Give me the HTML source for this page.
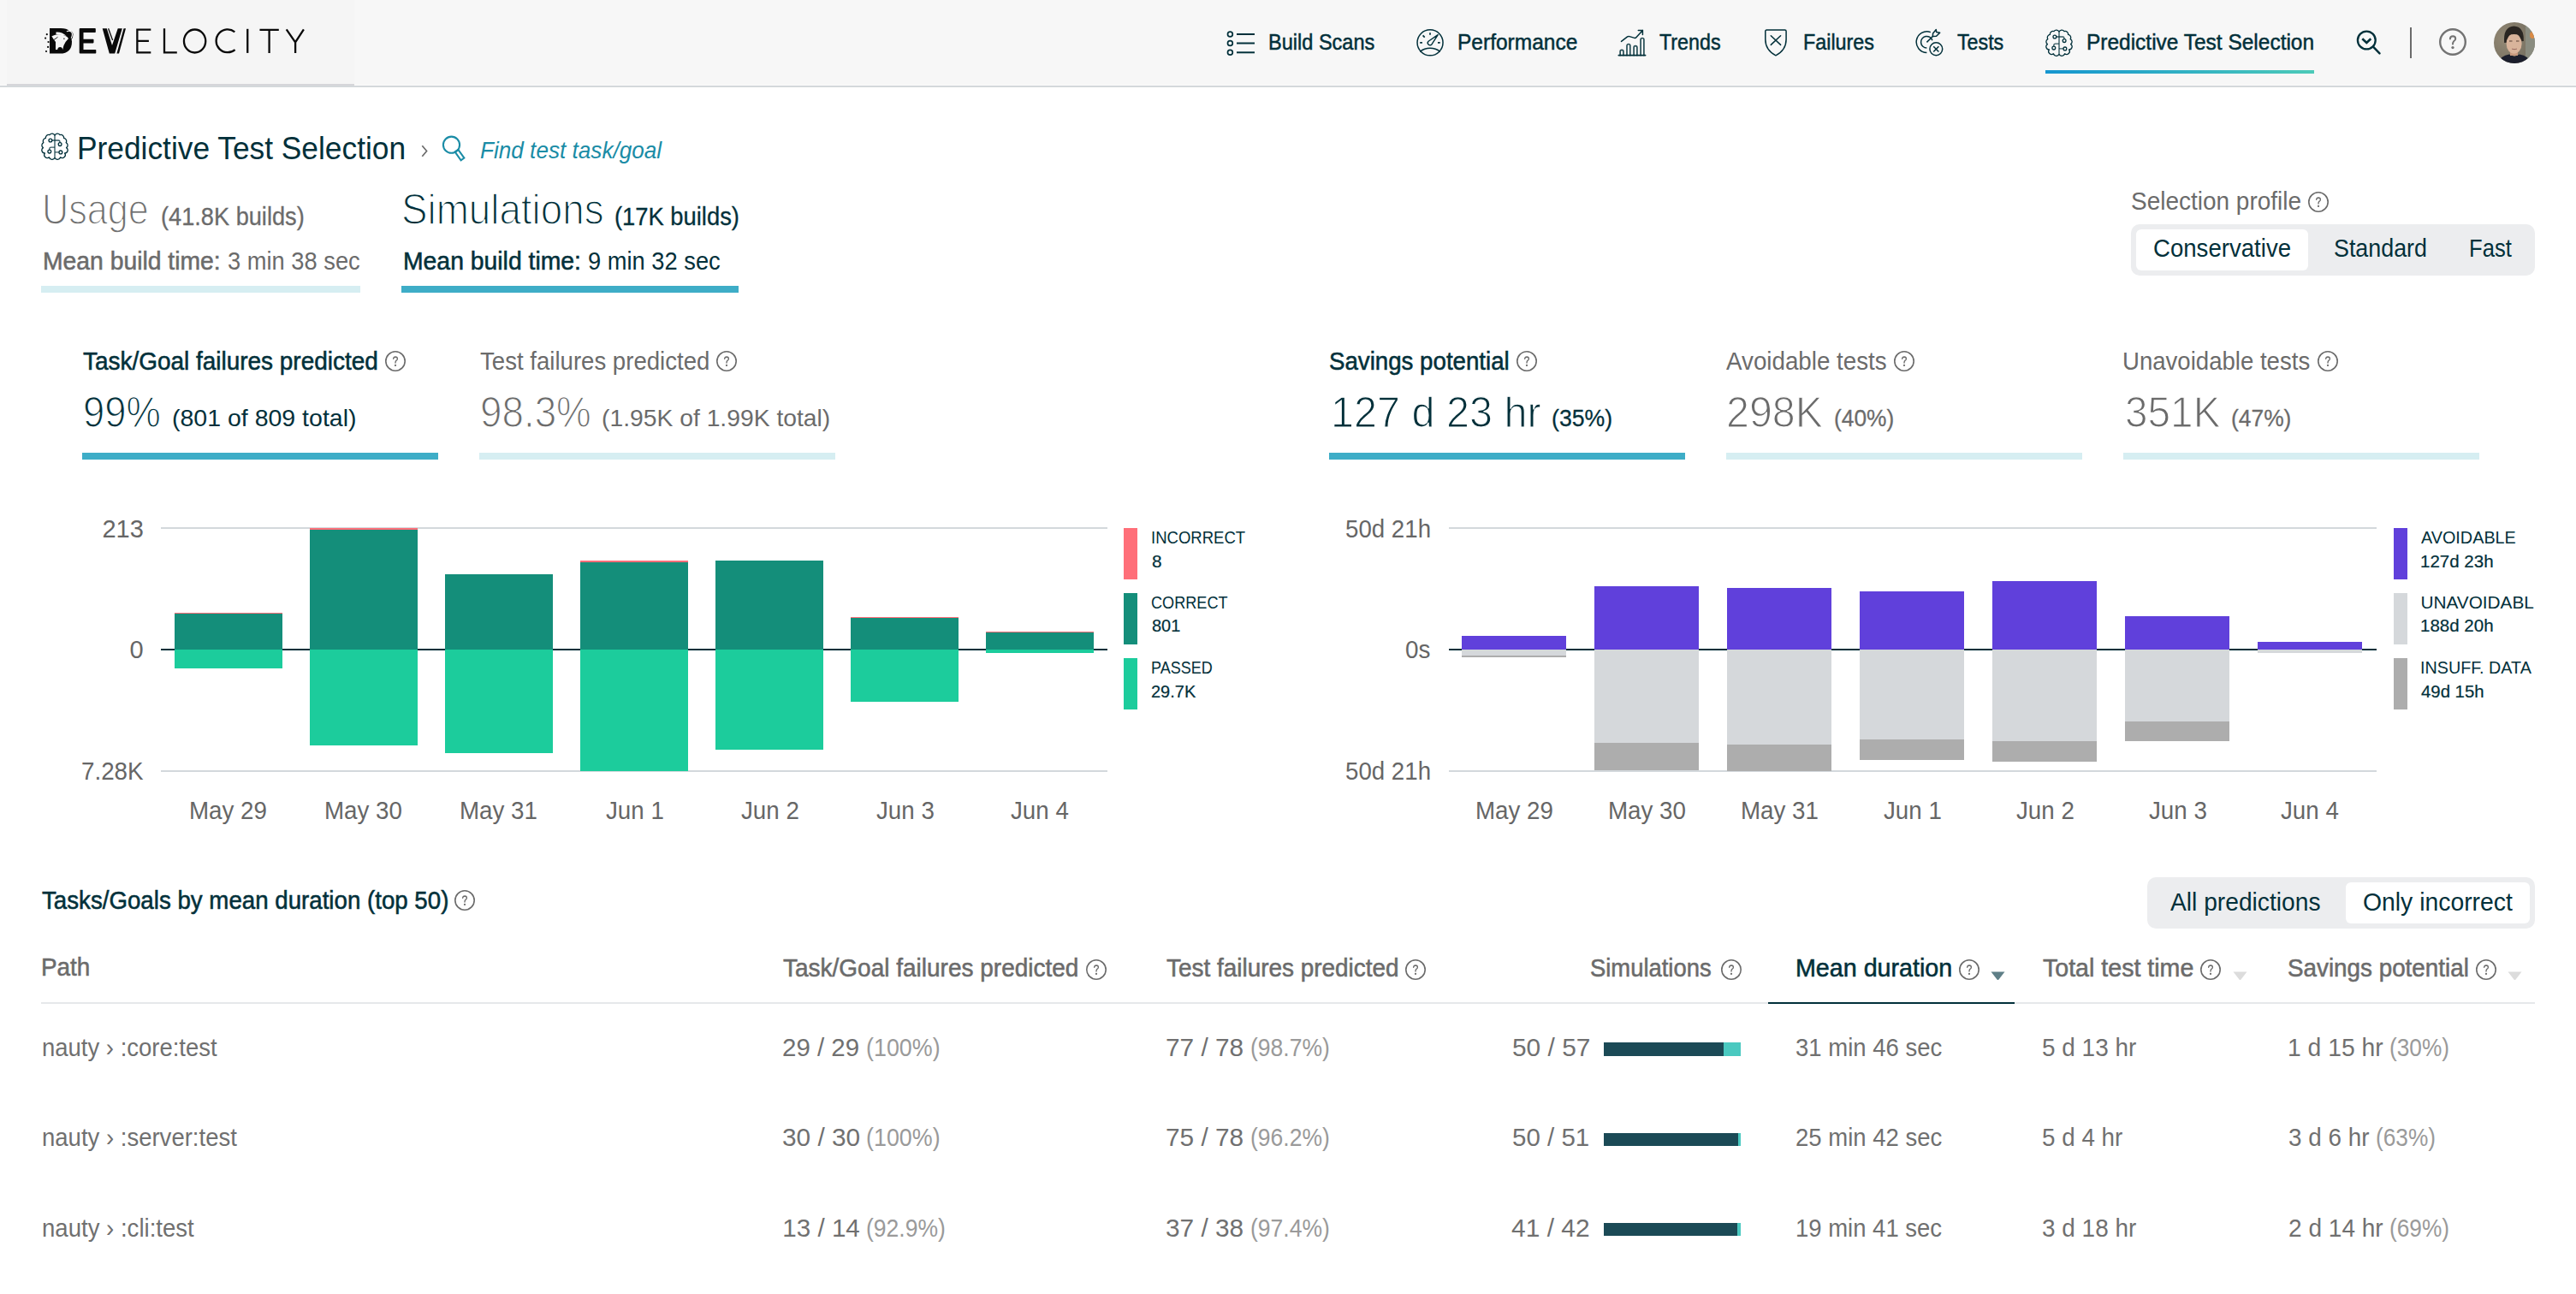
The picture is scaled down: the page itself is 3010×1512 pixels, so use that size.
<!DOCTYPE html>
<html><head><meta charset="utf-8"><style>
html,body{margin:0;padding:0;}
body{width:3010px;height:1512px;position:relative;overflow:hidden;background:#fff;font-family:"Liberation Sans",sans-serif;}
</style></head><body>
<div style="position:absolute;left:0px;top:0px;width:3010px;height:99px;background:#f7f7f7;"></div>
<div style="position:absolute;left:0px;top:99px;width:3010px;height:1px;background:#fafafa;"></div>
<div style="position:absolute;left:0px;top:100px;width:3010px;height:2px;background:#d4d8db;"></div>
<div style="position:absolute;left:8px;top:0px;width:406px;height:98px;background:#f5f5f5;"></div>
<div style="position:absolute;left:8px;top:98px;width:406px;height:2px;background:#d6d6da;"></div>
<svg style="position:absolute;left:50px;top:30px" width="310" height="36" viewBox="50 30 310 36">
<g fill="#0a0a0a">
<path d="M58 33.1 H71 Q78 33.1 81 36 Q85 36 85.5 40 Q85.5 44 83.5 46 Q84 48 84 48.5 Q84 62.6 70 62.6 H58 Z"/>
<path d="M92.7 34 Q92.7 33.1 93.7 33.1 H111 Q111.8 33.1 111.8 34 V37.2 Q111.8 38 111 38 H97.5 V45.7 H108.7 Q109.5 45.7 109.5 46.5 V49.6 Q109.5 50.4 108.7 50.4 H97.5 V57.9 H111.5 Q112.3 57.9 112.3 58.7 V61.8 Q112.3 62.6 111.5 62.6 H93.7 Q92.7 62.6 92.7 61.6 Z"/>
<path d="M119.7 33.3 H124.8 L131 53 L137.7 33.3 H142.8 L134.2 62.6 H127.8 Z"/>
<path d="M144.5 33.3 H147 L139 62.6 H136.4 Z"/>
<circle cx="54.8" cy="40.2" r="1.1"/><circle cx="53.1" cy="44.6" r="1.1"/><circle cx="56.5" cy="49.1" r="1.1"/><circle cx="56.1" cy="54.9" r="1.1"/><circle cx="54" cy="60" r="1.1"/>
</g>
<g fill="#f5f5f5">

<path d="M60.4 42.2 Q68 38.6 75.5 41.6 Q79 43 80 45 Q76 49 74.5 53 Q73.8 56 73.2 57.9 H65 V49 Q62.5 46 60.4 42.2 Z"/>
<path d="M65.5 37.6 Q72 37 77.5 41.8 Q73 40.8 65.5 40.3 Z"/>
<path d="M77.5 36.5 Q81 34.5 84.3 37 Q86 40.5 83.6 45 L82.7 44.5 Q84.6 40.5 83.3 38 Q81 36 78.2 37.3 Z"/>
<path d="M67.2 57.9 Q67.5 54.9 70.2 54.9 Q72.9 54.9 73.2 57.9 Z" fill="#0a0a0a"/>
</g>
<circle cx="74.9" cy="45.3" r="0.7" fill="#0a0a0a"/>
<path d="M126.6 33.3 L131.6 47" stroke="#0a0a0a" stroke-width="1.3"/>
<path d="M63 46.5 L67.5 43.3" stroke="#0a0a0a" stroke-width="0.9"/>
<g fill="none" stroke="#0a0a0a" stroke-width="2.3">
<path d="M176.3 34.7 H160.35 V61.3 H176.3 M160.35 47.8 H173.9"/>
<path d="M192 33.3 V61.3 H206.8"/>
<ellipse cx="227.6" cy="48" rx="12.65" ry="13.5"/>
<path d="M274.3 37.3 A13.4 13.4 0 1 0 274.6 58.1"/>
<path d="M289.25 33.8 V61.9"/>
<path d="M303.45 34.8 H325.8 M314.6 34.8 V61.9"/>
<path d="M334.7 34.3 L345.1 49.45 L354.9 34.3 M345.1 49.45 V61.9"/>
</g>
</svg>
<div style="position:absolute;left:2390px;top:82px;width:314px;height:4px;background:linear-gradient(90deg,#1596d0,#4ccab8)"></div>
<svg style="position:absolute;left:1430px;top:34px" width="40" height="32" viewBox="0 0 40 32">
<g fill="none" stroke="#02303a" stroke-width="1.7"><circle cx="7.4" cy="6" r="2.9"/><circle cx="7.4" cy="16.5" r="2.9"/><circle cx="7.4" cy="27.3" r="2.9"/></g>
<g stroke="#02303a" stroke-width="2"><path d="M15 6 H36"/><path d="M15 16.5 H36"/><path d="M15 27.3 H36"/></g></svg>
<svg style="position:absolute;left:1654px;top:33px" width="34" height="34" viewBox="0 0 34 34">
<g fill="none" stroke="#02303a" stroke-width="1.5"><circle cx="17.05" cy="16.85" r="15"/>
<path d="M5.2 27.3 A19.4 19.4 0 0 1 28.8 27.3"/>
<path d="M17 5.2 V7.8 M8.6 8.4 L10.7 10.6 M5.2 16.9 H7.9 M26 16.9 H28.7" stroke-width="1.7"/>
<path d="M26.2 7.7 L15.07 15.21 A2.7 2.7 0 1 0 18.93 18.99 Z" stroke-width="1.4" stroke-linejoin="round"/></g></svg>
<svg style="position:absolute;left:1890px;top:34px" width="34" height="32" viewBox="0 0 34 32">
<g fill="none" stroke="#02303a" stroke-width="1.5" stroke-linecap="round" stroke-linejoin="round">
<path d="M1.3 30.6 H32.6" stroke-width="1.7"/>
<path d="M3.15 30.6 V26.3 A1.9 1.9 0 0 1 6.95 26.3 V30.6 M11 30.6 V19.4 A1.9 1.9 0 0 1 14.8 19.4 V30.6 M19.1 30.6 V21.6 A1.9 1.9 0 0 1 22.9 21.6 V30.6 M27.1 30.6 V12.4 A1.9 1.9 0 0 1 30.9 12.4 V30.6" stroke-width="1.7" stroke-opacity="0.85"/>
<path d="M4.5 14.4 L11.6 8.9 Q12.7 8.2 14 8.6 L20 10.4 Q20.9 10.6 21.6 9.9 L29.4 1.4 M24.3 1.4 H29.4 V6.6"/></g></svg>
<svg style="position:absolute;left:2061px;top:34px" width="28" height="33" viewBox="0 0 28 33">
<path d="M1.8 2.6 Q1.8 1.1 3.3 1.1 H24.6 Q26.1 1.1 26.1 2.6 V12 Q26.1 24.5 13.95 30.8 Q1.8 24.5 1.8 12 Z" fill="none" stroke="#02303a" stroke-width="1.5" stroke-linejoin="round"/>
<path d="M8.3 7.7 L19.6 18.4 M19.6 7.7 L8.3 18.4" stroke="#02303a" stroke-width="1.5" stroke-linecap="round"/></svg>
<svg style="position:absolute;left:2238px;top:33px" width="35" height="35" viewBox="0 0 35 35">
<g fill="none" stroke="#02303a" stroke-width="1.5" stroke-linejoin="round">
<path d="M17.85 4.6 A12.3 12.3 0 1 0 13.4 28.4"/>
<path d="M19.9 14.3 A6.8 6.8 0 1 0 13.4 23"/>
<path d="M13.4 16.4 L20.3 9.5"/>
<path d="M20.3 9.5 L20.6 5.9 L24.3 1.6 L24.7 4.6 L28.7 5.2 L24.6 9.3 Z"/>
<circle cx="24.3" cy="24.25" r="7.4"/>
<path d="M21.25 21.2 L27.4 27.6 M27.4 21.2 L21.25 27.6"/></g></svg>
<svg style="position:absolute;left:2390px;top:34px" width="32" height="32" viewBox="0 0 32 32">
<g fill="none" stroke="#02303a" stroke-width="1.3" stroke-linejoin="round">
<path d="M16 3.2 A3.5 3.5 0 0 0 10 2.6 A3.5 3.5 0 0 0 5.4 6.4 A3.5 3.5 0 0 0 2.8 11.6 A3.5 3.5 0 0 0 2.4 17.6 A3.5 3.5 0 0 0 4.4 24 A3.5 3.5 0 0 0 9.4 28.8 A3.5 3.5 0 0 0 16 29.2"/>
<path d="M16 3.2 A3.5 3.5 0 0 1 22 2.6 A3.5 3.5 0 0 1 26.6 6.4 A3.5 3.5 0 0 1 29.2 11.6 A3.5 3.5 0 0 1 29.6 17.6 A3.5 3.5 0 0 1 27.6 24 A3.5 3.5 0 0 1 22.6 28.8 A3.5 3.5 0 0 1 16 29.2"/>
<path d="M16 3 V29.5" stroke-width="1.8199999999999998" opacity="0.6"/>
<path d="M12.8 9 H20.3 Q22.1 9 22.1 11.7 M9.8 20.2 V19 Q9.8 17.1 11.7 17.1 H16 M16 22.9 H21" opacity="0.8"/>
<circle cx="10.9" cy="9" r="1.9"/><circle cx="22.1" cy="13.6" r="1.9"/><circle cx="9.8" cy="22.1" r="1.9"/><circle cx="22.9" cy="22.9" r="1.9"/>
</g></svg>
<svg style="position:absolute;left:2750px;top:32px" width="36" height="36" viewBox="0 0 36 36">
<circle cx="15.3" cy="15" r="10.4" fill="none" stroke="#02303a" stroke-width="2.3"/>
<path d="M23 22.7 L30.5 30.3" stroke="#02303a" stroke-width="2.5" stroke-linecap="round"/>
<path d="M10.3 13.2 L15.3 18 L20.3 13.2" fill="none" stroke="#02303a" stroke-width="2.6"/></svg>
<div style="position:absolute;left:2816px;top:32px;width:2px;height:36px;background:#6b6b6b;"></div>
<svg style="position:absolute;left:2850px;top:33px" width="32" height="32" viewBox="0 0 32 32"><circle cx="16" cy="16" r="14.80" fill="none" stroke="#737373" stroke-width="2.40"/><path d="M12.9 12.4 Q13.1 9.3 16.1 9.3 Q19.2 9.4 19.2 12.2 Q19.2 14 17.2 15.2 Q16 16.1 16 18.6" fill="none" stroke="#737373" stroke-width="2.04" stroke-linecap="round"/><circle cx="16" cy="22.6" r="1.68" fill="#737373"/></svg>
<svg style="position:absolute;left:2914px;top:26px" width="48" height="48" viewBox="0 0 48 48">
<defs><clipPath id="avc"><circle cx="24" cy="24" r="24"/></clipPath>
<radialGradient id="avbg" cx="0.3" cy="0.4" r="0.8"><stop offset="0" stop-color="#958a76"/><stop offset="1" stop-color="#6f6a5c"/></radialGradient></defs>
<g clip-path="url(#avc)">
<rect width="48" height="48" fill="url(#avbg)"/>
<rect x="37" y="0" width="11" height="48" fill="#8a8c80"/>
<ellipse cx="45" cy="15" rx="3" ry="4" fill="#d98a45"/>
<path d="M4 48 Q8 39 18 37.5 L24 40 L30 37.5 Q40 39 44 48 Z" fill="#1b1e2c"/>
<rect x="19" y="31" width="9" height="8" fill="#c7997e"/>
<path d="M12.2 24 Q10.5 5.5 23.5 4.5 Q35.5 5 34.8 22 Z" fill="#2a2622"/>
<ellipse cx="23.6" cy="25" rx="9" ry="11.8" fill="#d9b49b"/>
<path d="M14.3 21 Q14 12.5 23.6 11.8 Q32.5 12.3 33 20 Q31.5 14.8 27 14.2 Q21 13.6 17.5 15 Q15 16.8 14.3 21 Z" fill="#2a2622"/>
<path d="M18 22 H21.5 M26 22 H29.5" stroke="#5a4034" stroke-width="1.1"/>
<path d="M21 31 Q24 32.5 27 31" stroke="#a8786a" stroke-width="1"/>
</g></svg>
<svg style="position:absolute;left:48px;top:155px" width="32" height="32" viewBox="0 0 32 32">
<g fill="none" stroke="#02303a" stroke-width="1.3" stroke-linejoin="round">
<path d="M16 3.2 A3.5 3.5 0 0 0 10 2.6 A3.5 3.5 0 0 0 5.4 6.4 A3.5 3.5 0 0 0 2.8 11.6 A3.5 3.5 0 0 0 2.4 17.6 A3.5 3.5 0 0 0 4.4 24 A3.5 3.5 0 0 0 9.4 28.8 A3.5 3.5 0 0 0 16 29.2"/>
<path d="M16 3.2 A3.5 3.5 0 0 1 22 2.6 A3.5 3.5 0 0 1 26.6 6.4 A3.5 3.5 0 0 1 29.2 11.6 A3.5 3.5 0 0 1 29.6 17.6 A3.5 3.5 0 0 1 27.6 24 A3.5 3.5 0 0 1 22.6 28.8 A3.5 3.5 0 0 1 16 29.2"/>
<path d="M16 3 V29.5" stroke-width="1.8199999999999998" opacity="0.6"/>
<path d="M12.8 9 H20.3 Q22.1 9 22.1 11.7 M9.8 20.2 V19 Q9.8 17.1 11.7 17.1 H16 M16 22.9 H21" opacity="0.8"/>
<circle cx="10.9" cy="9" r="1.9"/><circle cx="22.1" cy="13.6" r="1.9"/><circle cx="9.8" cy="22.1" r="1.9"/><circle cx="22.9" cy="22.9" r="1.9"/>
</g></svg>
<svg style="position:absolute;left:488px;top:166px" width="14" height="20" viewBox="0 0 14 20"><path d="M5.3 4.2 L10.6 10.5 L5.3 16.8" fill="none" stroke="#6b6b6b" stroke-width="1.7"/></svg>
<svg style="position:absolute;left:514px;top:156px" width="34" height="36" viewBox="0 0 34 36"><circle cx="13.5" cy="13.2" r="9.6" fill="none" stroke="#1a8ca6" stroke-width="2.1"/><path d="M17.6 21.4 L21.4 18.8 L28.4 28.6 L24.6 31.4 Z" fill="none" stroke="#1a8ca6" stroke-width="2" stroke-linejoin="miter"/></svg>
<div style="position:absolute;left:48px;top:334px;width:373px;height:8px;background:#d6eef2;"></div>
<div style="position:absolute;left:469px;top:334px;width:394px;height:8px;background:#3eadc7;"></div>
<svg style="position:absolute;left:2697px;top:224px" width="24" height="24" viewBox="0 0 32 32"><circle cx="16" cy="16" r="14.93" fill="none" stroke="#6b6b6b" stroke-width="2.13"/><path d="M12.9 12.4 Q13.1 9.3 16.1 9.3 Q19.2 9.4 19.2 12.2 Q19.2 14 17.2 15.2 Q16 16.1 16 18.6" fill="none" stroke="#6b6b6b" stroke-width="1.81" stroke-linecap="round"/><circle cx="16" cy="22.6" r="1.49" fill="#6b6b6b"/></svg>
<div style="position:absolute;left:2490px;top:262px;width:472px;height:60px;background:#ecedef;border-radius:10px;"></div>
<div style="position:absolute;left:2496px;top:268px;width:201px;height:48px;background:#fff;border-radius:6px;"></div>
<svg style="position:absolute;left:450px;top:410px" width="24" height="24" viewBox="0 0 32 32"><circle cx="16" cy="16" r="14.93" fill="none" stroke="#6b6b6b" stroke-width="2.13"/><path d="M12.9 12.4 Q13.1 9.3 16.1 9.3 Q19.2 9.4 19.2 12.2 Q19.2 14 17.2 15.2 Q16 16.1 16 18.6" fill="none" stroke="#6b6b6b" stroke-width="1.81" stroke-linecap="round"/><circle cx="16" cy="22.6" r="1.49" fill="#6b6b6b"/></svg>
<div style="position:absolute;left:96px;top:529px;width:416px;height:8px;background:#3eadc7;"></div>
<svg style="position:absolute;left:837px;top:410px" width="24" height="24" viewBox="0 0 32 32"><circle cx="16" cy="16" r="14.93" fill="none" stroke="#6b6b6b" stroke-width="2.13"/><path d="M12.9 12.4 Q13.1 9.3 16.1 9.3 Q19.2 9.4 19.2 12.2 Q19.2 14 17.2 15.2 Q16 16.1 16 18.6" fill="none" stroke="#6b6b6b" stroke-width="1.81" stroke-linecap="round"/><circle cx="16" cy="22.6" r="1.49" fill="#6b6b6b"/></svg>
<div style="position:absolute;left:560px;top:529px;width:416px;height:8px;background:#d6eef2;"></div>
<svg style="position:absolute;left:1772px;top:410px" width="24" height="24" viewBox="0 0 32 32"><circle cx="16" cy="16" r="14.93" fill="none" stroke="#6b6b6b" stroke-width="2.13"/><path d="M12.9 12.4 Q13.1 9.3 16.1 9.3 Q19.2 9.4 19.2 12.2 Q19.2 14 17.2 15.2 Q16 16.1 16 18.6" fill="none" stroke="#6b6b6b" stroke-width="1.81" stroke-linecap="round"/><circle cx="16" cy="22.6" r="1.49" fill="#6b6b6b"/></svg>
<div style="position:absolute;left:1553px;top:529px;width:416px;height:8px;background:#3eadc7;"></div>
<svg style="position:absolute;left:2213px;top:410px" width="24" height="24" viewBox="0 0 32 32"><circle cx="16" cy="16" r="14.93" fill="none" stroke="#6b6b6b" stroke-width="2.13"/><path d="M12.9 12.4 Q13.1 9.3 16.1 9.3 Q19.2 9.4 19.2 12.2 Q19.2 14 17.2 15.2 Q16 16.1 16 18.6" fill="none" stroke="#6b6b6b" stroke-width="1.81" stroke-linecap="round"/><circle cx="16" cy="22.6" r="1.49" fill="#6b6b6b"/></svg>
<div style="position:absolute;left:2017px;top:529px;width:416px;height:8px;background:#d6eef2;"></div>
<svg style="position:absolute;left:2708px;top:410px" width="24" height="24" viewBox="0 0 32 32"><circle cx="16" cy="16" r="14.93" fill="none" stroke="#6b6b6b" stroke-width="2.13"/><path d="M12.9 12.4 Q13.1 9.3 16.1 9.3 Q19.2 9.4 19.2 12.2 Q19.2 14 17.2 15.2 Q16 16.1 16 18.6" fill="none" stroke="#6b6b6b" stroke-width="1.81" stroke-linecap="round"/><circle cx="16" cy="22.6" r="1.49" fill="#6b6b6b"/></svg>
<div style="position:absolute;left:2481px;top:529px;width:416px;height:8px;background:#d6eef2;"></div>
<div style="position:absolute;left:188px;top:616px;width:1106px;height:2px;background:#d3d8dc;"></div>
<div style="position:absolute;left:188px;top:900px;width:1106px;height:2px;background:#d3d8dc;"></div>
<div style="position:absolute;left:188px;top:758px;width:1106px;height:2px;background:#02303a;"></div>
<div style="position:absolute;left:204px;top:716px;width:126px;height:43px;background:#148e7a;"></div>
<div style="position:absolute;left:204px;top:716px;width:126px;height:1.2px;background:#ff6f79;"></div>
<div style="position:absolute;left:204px;top:759px;width:126px;height:22px;background:#1ccc9c;"></div>
<div style="position:absolute;left:362px;top:616.5px;width:126px;height:142.5px;background:#148e7a;"></div>
<div style="position:absolute;left:362px;top:616.5px;width:126px;height:2.5px;background:#ff6f79;"></div>
<div style="position:absolute;left:362px;top:759px;width:126px;height:111.70000000000005px;background:#1ccc9c;"></div>
<div style="position:absolute;left:520px;top:671px;width:126px;height:88px;background:#148e7a;"></div>
<div style="position:absolute;left:520px;top:759px;width:126px;height:121px;background:#1ccc9c;"></div>
<div style="position:absolute;left:678px;top:655px;width:126px;height:104px;background:#148e7a;"></div>
<div style="position:absolute;left:678px;top:655px;width:126px;height:1.8px;background:#ff6f79;"></div>
<div style="position:absolute;left:678px;top:759px;width:126px;height:142px;background:#1ccc9c;"></div>
<div style="position:absolute;left:836px;top:655.4px;width:126px;height:103.60000000000002px;background:#148e7a;"></div>
<div style="position:absolute;left:836px;top:759px;width:126px;height:116.5px;background:#1ccc9c;"></div>
<div style="position:absolute;left:994px;top:721px;width:126px;height:38px;background:#148e7a;"></div>
<div style="position:absolute;left:994px;top:721px;width:126px;height:1.2px;background:#ff6f79;"></div>
<div style="position:absolute;left:994px;top:759px;width:126px;height:61px;background:#1ccc9c;"></div>
<div style="position:absolute;left:1152px;top:737.6px;width:126px;height:21.399999999999977px;background:#148e7a;"></div>
<div style="position:absolute;left:1152px;top:737.6px;width:126px;height:1.2px;background:#ff6f79;"></div>
<div style="position:absolute;left:1152px;top:759px;width:126px;height:4px;background:#1ccc9c;"></div>
<div style="position:absolute;left:1313px;top:617px;width:16px;height:60px;background:#ff6f79;"></div>
<div style="position:absolute;left:1313px;top:693px;width:16px;height:60px;background:#148e7a;"></div>
<div style="position:absolute;left:1313px;top:769px;width:16px;height:60px;background:#1ccc9c;"></div>
<div style="position:absolute;left:1693px;top:616px;width:1084px;height:2px;background:#d3d8dc;"></div>
<div style="position:absolute;left:1693px;top:900px;width:1084px;height:2px;background:#d3d8dc;"></div>
<div style="position:absolute;left:1693px;top:758px;width:1084px;height:2px;background:#02303a;"></div>
<div style="position:absolute;left:1708px;top:743px;width:122px;height:16px;background:#6040db;"></div>
<div style="position:absolute;left:1708px;top:759px;width:122px;height:6.5px;background:#d5d8db;"></div>
<div style="position:absolute;left:1708px;top:765.5px;width:122px;height:2.0px;background:#adadad;"></div>
<div style="position:absolute;left:1863px;top:685px;width:122px;height:74px;background:#6040db;"></div>
<div style="position:absolute;left:1863px;top:759px;width:122px;height:109px;background:#d5d8db;"></div>
<div style="position:absolute;left:1863px;top:868px;width:122px;height:32px;background:#adadad;"></div>
<div style="position:absolute;left:2018px;top:687px;width:122px;height:72px;background:#6040db;"></div>
<div style="position:absolute;left:2018px;top:759px;width:122px;height:111px;background:#d5d8db;"></div>
<div style="position:absolute;left:2018px;top:870px;width:122px;height:31px;background:#adadad;"></div>
<div style="position:absolute;left:2173px;top:690.7px;width:122px;height:68.29999999999995px;background:#6040db;"></div>
<div style="position:absolute;left:2173px;top:759px;width:122px;height:104.79999999999995px;background:#d5d8db;"></div>
<div style="position:absolute;left:2173px;top:863.8px;width:122px;height:24.700000000000045px;background:#adadad;"></div>
<div style="position:absolute;left:2328px;top:679px;width:122px;height:80px;background:#6040db;"></div>
<div style="position:absolute;left:2328px;top:759px;width:122px;height:107px;background:#d5d8db;"></div>
<div style="position:absolute;left:2328px;top:866px;width:122px;height:23.700000000000045px;background:#adadad;"></div>
<div style="position:absolute;left:2483px;top:720px;width:122px;height:39px;background:#6040db;"></div>
<div style="position:absolute;left:2483px;top:759px;width:122px;height:83.70000000000005px;background:#d5d8db;"></div>
<div style="position:absolute;left:2483px;top:842.7px;width:122px;height:22.899999999999977px;background:#adadad;"></div>
<div style="position:absolute;left:2638px;top:750px;width:122px;height:9px;background:#6040db;"></div>
<div style="position:absolute;left:2638px;top:759px;width:122px;height:4px;background:#d5d8db;"></div>
<div style="position:absolute;left:2797px;top:617px;width:16px;height:60px;background:#6040db;"></div>
<div style="position:absolute;left:2797px;top:693px;width:16px;height:60px;background:#d5d8db;"></div>
<div style="position:absolute;left:2797px;top:769px;width:16px;height:60px;background:#adadad;"></div>
<svg style="position:absolute;left:531px;top:1040px" width="24" height="24" viewBox="0 0 32 32"><circle cx="16" cy="16" r="14.93" fill="none" stroke="#6b6b6b" stroke-width="2.13"/><path d="M12.9 12.4 Q13.1 9.3 16.1 9.3 Q19.2 9.4 19.2 12.2 Q19.2 14 17.2 15.2 Q16 16.1 16 18.6" fill="none" stroke="#6b6b6b" stroke-width="1.81" stroke-linecap="round"/><circle cx="16" cy="22.6" r="1.49" fill="#6b6b6b"/></svg>
<div style="position:absolute;left:2509px;top:1025px;width:453px;height:60px;background:#ecedef;border-radius:10px;"></div>
<div style="position:absolute;left:2741px;top:1030.5px;width:215px;height:48.5px;background:#fff;border-radius:6px;"></div>
<div style="position:absolute;left:48px;top:1171px;width:2914px;height:2px;background:#e6e8ea;"></div>
<div style="position:absolute;left:2066px;top:1171px;width:288px;height:2px;background:#02303a;"></div>
<svg style="position:absolute;left:1269px;top:1121px" width="24" height="24" viewBox="0 0 32 32"><circle cx="16" cy="16" r="14.93" fill="none" stroke="#6b6b6b" stroke-width="2.13"/><path d="M12.9 12.4 Q13.1 9.3 16.1 9.3 Q19.2 9.4 19.2 12.2 Q19.2 14 17.2 15.2 Q16 16.1 16 18.6" fill="none" stroke="#6b6b6b" stroke-width="1.81" stroke-linecap="round"/><circle cx="16" cy="22.6" r="1.49" fill="#6b6b6b"/></svg>
<svg style="position:absolute;left:1642px;top:1121px" width="24" height="24" viewBox="0 0 32 32"><circle cx="16" cy="16" r="14.93" fill="none" stroke="#6b6b6b" stroke-width="2.13"/><path d="M12.9 12.4 Q13.1 9.3 16.1 9.3 Q19.2 9.4 19.2 12.2 Q19.2 14 17.2 15.2 Q16 16.1 16 18.6" fill="none" stroke="#6b6b6b" stroke-width="1.81" stroke-linecap="round"/><circle cx="16" cy="22.6" r="1.49" fill="#6b6b6b"/></svg>
<svg style="position:absolute;left:2010.5px;top:1121px" width="24" height="24" viewBox="0 0 32 32"><circle cx="16" cy="16" r="14.93" fill="none" stroke="#6b6b6b" stroke-width="2.13"/><path d="M12.9 12.4 Q13.1 9.3 16.1 9.3 Q19.2 9.4 19.2 12.2 Q19.2 14 17.2 15.2 Q16 16.1 16 18.6" fill="none" stroke="#6b6b6b" stroke-width="1.81" stroke-linecap="round"/><circle cx="16" cy="22.6" r="1.49" fill="#6b6b6b"/></svg>
<svg style="position:absolute;left:2288.5px;top:1121px" width="24" height="24" viewBox="0 0 32 32"><circle cx="16" cy="16" r="14.93" fill="none" stroke="#6b6b6b" stroke-width="2.13"/><path d="M12.9 12.4 Q13.1 9.3 16.1 9.3 Q19.2 9.4 19.2 12.2 Q19.2 14 17.2 15.2 Q16 16.1 16 18.6" fill="none" stroke="#6b6b6b" stroke-width="1.81" stroke-linecap="round"/><circle cx="16" cy="22.6" r="1.49" fill="#6b6b6b"/></svg>
<svg style="position:absolute;left:2326px;top:1135px" width="17" height="11" viewBox="0 0 17 11"><path d="M0.5 0.5 H16.5 L9.5 9.5 Q8.5 10.7 7.5 9.5 Z" fill="#5f7f87"/></svg>
<svg style="position:absolute;left:2571px;top:1121px" width="24" height="24" viewBox="0 0 32 32"><circle cx="16" cy="16" r="14.93" fill="none" stroke="#6b6b6b" stroke-width="2.13"/><path d="M12.9 12.4 Q13.1 9.3 16.1 9.3 Q19.2 9.4 19.2 12.2 Q19.2 14 17.2 15.2 Q16 16.1 16 18.6" fill="none" stroke="#6b6b6b" stroke-width="1.81" stroke-linecap="round"/><circle cx="16" cy="22.6" r="1.49" fill="#6b6b6b"/></svg>
<svg style="position:absolute;left:2609px;top:1135px" width="17" height="11" viewBox="0 0 17 11"><path d="M0.5 0.5 H16.5 L9.5 9.5 Q8.5 10.7 7.5 9.5 Z" fill="#dcdcdc"/></svg>
<svg style="position:absolute;left:2893px;top:1121px" width="24" height="24" viewBox="0 0 32 32"><circle cx="16" cy="16" r="14.93" fill="none" stroke="#6b6b6b" stroke-width="2.13"/><path d="M12.9 12.4 Q13.1 9.3 16.1 9.3 Q19.2 9.4 19.2 12.2 Q19.2 14 17.2 15.2 Q16 16.1 16 18.6" fill="none" stroke="#6b6b6b" stroke-width="1.81" stroke-linecap="round"/><circle cx="16" cy="22.6" r="1.49" fill="#6b6b6b"/></svg>
<svg style="position:absolute;left:2930px;top:1135px" width="17" height="11" viewBox="0 0 17 11"><path d="M0.5 0.5 H16.5 L9.5 9.5 Q8.5 10.7 7.5 9.5 Z" fill="#dcdcdc"/></svg>
<div style="position:absolute;left:1874px;top:1218.2px;width:160px;height:15.7px;background:#4ac9c0;"></div>
<div style="position:absolute;left:1874px;top:1218.2px;width:140.0px;height:15.7px;background:#1b4a56;"></div>
<div style="position:absolute;left:1874px;top:1323.5px;width:160px;height:15.7px;background:#4ac9c0;"></div>
<div style="position:absolute;left:1874px;top:1323.5px;width:156.8px;height:15.7px;background:#1b4a56;"></div>
<div style="position:absolute;left:1874px;top:1428.8px;width:160px;height:15.7px;background:#4ac9c0;"></div>
<div style="position:absolute;left:1874px;top:1428.8px;width:156.0px;height:15.7px;background:#1b4a56;"></div>
<div style="position:absolute;left:1481.92px;top:34.91px;font-size:26.5px;line-height:29.61px;font-weight:400;font-style:normal;color:#02303a;white-space:pre;transform:scaleX(0.8882);transform-origin:0 0;-webkit-text-stroke:0.50px #02303a;">Build Scans</div>
<div style="position:absolute;left:1702.55px;top:34.91px;font-size:26.5px;line-height:29.61px;font-weight:400;font-style:normal;color:#02303a;white-space:pre;transform:scaleX(0.9251);transform-origin:0 0;-webkit-text-stroke:0.50px #02303a;">Performance</div>
<div style="position:absolute;left:1939.40px;top:34.91px;font-size:26.5px;line-height:29.61px;font-weight:400;font-style:normal;color:#02303a;white-space:pre;transform:scaleX(0.8788);transform-origin:0 0;-webkit-text-stroke:0.50px #02303a;">Trends</div>
<div style="position:absolute;left:2107.04px;top:34.91px;font-size:26.5px;line-height:29.61px;font-weight:400;font-style:normal;color:#02303a;white-space:pre;transform:scaleX(0.8804);transform-origin:0 0;-webkit-text-stroke:0.50px #02303a;">Failures</div>
<div style="position:absolute;left:2287.00px;top:34.91px;font-size:26.5px;line-height:29.61px;font-weight:400;font-style:normal;color:#02303a;white-space:pre;transform:scaleX(0.8766);transform-origin:0 0;-webkit-text-stroke:0.50px #02303a;">Tests</div>
<div style="position:absolute;left:2437.55px;top:34.91px;font-size:26.5px;line-height:29.61px;font-weight:400;font-style:normal;color:#02303a;white-space:pre;transform:scaleX(0.9232);transform-origin:0 0;-webkit-text-stroke:0.50px #02303a;">Predictive Test Selection</div>
<div style="position:absolute;left:90.20px;top:151.78px;font-size:37.8px;line-height:42.23px;font-weight:400;font-style:normal;color:#02303a;white-space:pre;transform:scaleX(0.9343);transform-origin:0 0;">Predictive Test Selection</div>
<div style="position:absolute;left:561.40px;top:160.33px;font-size:27.8px;line-height:31.06px;font-weight:400;font-style:italic;color:#1a8ca6;white-space:pre;transform:scaleX(0.9404);transform-origin:0 0;">Find test task/goal</div>
<div style="position:absolute;left:48.99px;top:218.20px;font-size:49.6px;line-height:55.41px;font-weight:400;font-style:normal;color:#707070;white-space:pre;transform:scaleX(0.8698);transform-origin:0 0;-webkit-text-stroke:1.50px #fff;">Usage</div>
<div style="position:absolute;left:187.86px;top:236.85px;font-size:29px;line-height:32.40px;font-weight:400;font-style:normal;color:#6b6b6b;white-space:pre;transform:scaleX(0.9372);transform-origin:0 0;-webkit-text-stroke:0.30px #6b6b6b;">(41.8K builds)</div>
<div style="position:absolute;left:50.13px;top:288.73px;font-size:28.8px;line-height:32.18px;font-weight:400;font-style:normal;color:#6b6b6b;white-space:pre;transform:scaleX(0.9827);transform-origin:0 0;-webkit-text-stroke:0.55px #6b6b6b;">Mean build time:</div>
<div style="position:absolute;left:266.05px;top:288.73px;font-size:28.8px;line-height:32.18px;font-weight:400;font-style:normal;color:#6b6b6b;white-space:pre;transform:scaleX(0.9477);transform-origin:0 0;">3 min 38 sec</div>
<div style="position:absolute;left:469.15px;top:218.00px;font-size:49.6px;line-height:55.41px;font-weight:400;font-style:normal;color:#02303a;white-space:pre;transform:scaleX(0.9226);transform-origin:0 0;-webkit-text-stroke:1.50px #fff;">Simulations</div>
<div style="position:absolute;left:718.06px;top:236.65px;font-size:29px;line-height:32.40px;font-weight:400;font-style:normal;color:#02303a;white-space:pre;transform:scaleX(0.9429);transform-origin:0 0;-webkit-text-stroke:0.30px #02303a;">(17K builds)</div>
<div style="position:absolute;left:471.03px;top:288.53px;font-size:28.8px;line-height:32.18px;font-weight:400;font-style:normal;color:#02303a;white-space:pre;transform:scaleX(0.9842);transform-origin:0 0;-webkit-text-stroke:0.55px #02303a;">Mean build time:</div>
<div style="position:absolute;left:687.05px;top:288.53px;font-size:28.8px;line-height:32.18px;font-weight:400;font-style:normal;color:#02303a;white-space:pre;transform:scaleX(0.9477);transform-origin:0 0;">9 min 32 sec</div>
<div style="position:absolute;left:2489.94px;top:218.95px;font-size:29px;line-height:32.40px;font-weight:400;font-style:normal;color:#6b6b6b;white-space:pre;transform:scaleX(0.9647);transform-origin:0 0;">Selection profile</div>
<div style="position:absolute;left:2516.05px;top:274.35px;font-size:29px;line-height:32.40px;font-weight:400;font-style:normal;color:#02303a;white-space:pre;transform:scaleX(0.9514);transform-origin:0 0;">Conservative</div>
<div style="position:absolute;left:2726.87px;top:274.35px;font-size:29px;line-height:32.40px;font-weight:400;font-style:normal;color:#02303a;white-space:pre;transform:scaleX(0.9258);transform-origin:0 0;">Standard</div>
<div style="position:absolute;left:2885.23px;top:274.35px;font-size:29px;line-height:32.40px;font-weight:400;font-style:normal;color:#02303a;white-space:pre;transform:scaleX(0.8833);transform-origin:0 0;">Fast</div>
<div style="position:absolute;left:96.50px;top:405.95px;font-size:29px;line-height:32.40px;font-weight:400;font-style:normal;color:#02303a;white-space:pre;transform:scaleX(0.9635);transform-origin:0 0;-webkit-text-stroke:0.55px #02303a;">Task/Goal failures predicted</div>
<div style="position:absolute;left:97.17px;top:453.99px;font-size:49.5px;line-height:55.30px;font-weight:400;font-style:normal;color:#02303a;white-space:pre;transform:scaleX(0.9161);transform-origin:0 0;-webkit-text-stroke:1.25px #fff;">99%</div>
<div style="position:absolute;left:201.00px;top:473.00px;font-size:28.5px;line-height:31.84px;font-weight:400;font-style:normal;color:#02303a;white-space:pre;">(801 of 809 total)</div>
<div style="position:absolute;left:560.70px;top:405.95px;font-size:29px;line-height:32.40px;font-weight:400;font-style:normal;color:#6b6b6b;white-space:pre;transform:scaleX(0.9514);transform-origin:0 0;">Test failures predicted</div>
<div style="position:absolute;left:561.15px;top:453.99px;font-size:49.5px;line-height:55.30px;font-weight:400;font-style:normal;color:#6b6b6b;white-space:pre;transform:scaleX(0.9247);transform-origin:0 0;-webkit-text-stroke:1.25px #fff;">98.3%</div>
<div style="position:absolute;left:703.01px;top:473.00px;font-size:28.5px;line-height:31.84px;font-weight:400;font-style:normal;color:#6b6b6b;white-space:pre;transform:scaleX(0.9924);transform-origin:0 0;">(1.95K of 1.99K total)</div>
<div style="position:absolute;left:1552.95px;top:405.95px;font-size:29px;line-height:32.40px;font-weight:400;font-style:normal;color:#02303a;white-space:pre;transform:scaleX(0.9541);transform-origin:0 0;-webkit-text-stroke:0.55px #02303a;">Savings potential</div>
<div style="position:absolute;left:1554.86px;top:453.99px;font-size:49.5px;line-height:55.30px;font-weight:400;font-style:normal;color:#02303a;white-space:pre;transform:scaleX(0.9807);transform-origin:0 0;-webkit-text-stroke:1.25px #fff;">127 d 23 hr</div>
<div style="position:absolute;left:1812.56px;top:473.00px;font-size:28.5px;line-height:31.84px;font-weight:400;font-style:normal;color:#02303a;white-space:pre;transform:scaleX(0.9356);transform-origin:0 0;-webkit-text-stroke:0.29px #02303a;">(35%)</div>
<div style="position:absolute;left:2017.20px;top:405.95px;font-size:29px;line-height:32.40px;font-weight:400;font-style:normal;color:#6b6b6b;white-space:pre;transform:scaleX(0.9568);transform-origin:0 0;">Avoidable tests</div>
<div style="position:absolute;left:2017.45px;top:453.99px;font-size:49.5px;line-height:55.30px;font-weight:400;font-style:normal;color:#6b6b6b;white-space:pre;transform:scaleX(0.9772);transform-origin:0 0;-webkit-text-stroke:1.25px #fff;">298K</div>
<div style="position:absolute;left:2143.08px;top:473.00px;font-size:28.5px;line-height:31.84px;font-weight:400;font-style:normal;color:#6b6b6b;white-space:pre;transform:scaleX(0.9234);transform-origin:0 0;-webkit-text-stroke:0.29px #6b6b6b;">(40%)</div>
<div style="position:absolute;left:2480.30px;top:405.95px;font-size:29px;line-height:32.40px;font-weight:400;font-style:normal;color:#6b6b6b;white-space:pre;transform:scaleX(0.9508);transform-origin:0 0;">Unavoidable tests</div>
<div style="position:absolute;left:2482.54px;top:453.99px;font-size:49.5px;line-height:55.30px;font-weight:400;font-style:normal;color:#6b6b6b;white-space:pre;transform:scaleX(0.9643);transform-origin:0 0;-webkit-text-stroke:1.25px #fff;">351K</div>
<div style="position:absolute;left:2606.97px;top:473.00px;font-size:28.5px;line-height:31.84px;font-weight:400;font-style:normal;color:#6b6b6b;white-space:pre;transform:scaleX(0.9261);transform-origin:0 0;-webkit-text-stroke:0.29px #6b6b6b;">(47%)</div>
<div style="position:absolute;left:119.40px;top:601.75px;font-size:29px;line-height:32.40px;font-weight:400;font-style:normal;color:#666666;white-space:pre;">213</div>
<div style="position:absolute;left:151.60px;top:743.25px;font-size:29px;line-height:32.40px;font-weight:400;font-style:normal;color:#666666;white-space:pre;">0</div>
<div style="position:absolute;left:94.64px;top:884.75px;font-size:29px;line-height:32.40px;font-weight:400;font-style:normal;color:#666666;white-space:pre;transform:scaleX(0.9570);transform-origin:0 0;">7.28K</div>
<div style="position:absolute;left:220.99px;top:931.61px;font-size:28.6px;line-height:31.95px;font-weight:400;font-style:normal;color:#666666;white-space:pre;transform:scaleX(0.9700);transform-origin:0 0;">May 29</div>
<div style="position:absolute;left:378.99px;top:931.61px;font-size:28.6px;line-height:31.95px;font-weight:400;font-style:normal;color:#666666;white-space:pre;transform:scaleX(0.9700);transform-origin:0 0;">May 30</div>
<div style="position:absolute;left:536.99px;top:931.61px;font-size:28.6px;line-height:31.95px;font-weight:400;font-style:normal;color:#666666;white-space:pre;transform:scaleX(0.9700);transform-origin:0 0;">May 31</div>
<div style="position:absolute;left:707.51px;top:931.61px;font-size:28.6px;line-height:31.95px;font-weight:400;font-style:normal;color:#666666;white-space:pre;transform:scaleX(0.9700);transform-origin:0 0;">Jun 1</div>
<div style="position:absolute;left:865.51px;top:931.61px;font-size:28.6px;line-height:31.95px;font-weight:400;font-style:normal;color:#666666;white-space:pre;transform:scaleX(0.9700);transform-origin:0 0;">Jun 2</div>
<div style="position:absolute;left:1023.51px;top:931.61px;font-size:28.6px;line-height:31.95px;font-weight:400;font-style:normal;color:#666666;white-space:pre;transform:scaleX(0.9700);transform-origin:0 0;">Jun 3</div>
<div style="position:absolute;left:1181.03px;top:931.61px;font-size:28.6px;line-height:31.95px;font-weight:400;font-style:normal;color:#666666;white-space:pre;transform:scaleX(0.9700);transform-origin:0 0;">Jun 4</div>
<div style="position:absolute;left:1345.11px;top:615.87px;font-size:20.8px;line-height:23.24px;font-weight:400;font-style:normal;color:#02303a;white-space:pre;transform:scaleX(0.8908);transform-origin:0 0;">INCORRECT</div>
<div style="position:absolute;left:1346.00px;top:643.87px;font-size:20.8px;line-height:23.24px;font-weight:400;font-style:normal;color:#02303a;white-space:pre;-webkit-text-stroke:0.22px #02303a;">8</div>
<div style="position:absolute;left:1345.13px;top:692.17px;font-size:20.8px;line-height:23.24px;font-weight:400;font-style:normal;color:#02303a;white-space:pre;transform:scaleX(0.8705);transform-origin:0 0;">CORRECT</div>
<div style="position:absolute;left:1346.00px;top:719.37px;font-size:20.8px;line-height:23.24px;font-weight:400;font-style:normal;color:#02303a;white-space:pre;transform:scaleX(0.9610);transform-origin:0 0;-webkit-text-stroke:0.22px #02303a;">801</div>
<div style="position:absolute;left:1345.13px;top:767.97px;font-size:20.8px;line-height:23.24px;font-weight:400;font-style:normal;color:#02303a;white-space:pre;transform:scaleX(0.8666);transform-origin:0 0;">PASSED</div>
<div style="position:absolute;left:1345.04px;top:795.87px;font-size:20.8px;line-height:23.24px;font-weight:400;font-style:normal;color:#02303a;white-space:pre;transform:scaleX(0.9612);transform-origin:0 0;-webkit-text-stroke:0.22px #02303a;">29.7K</div>
<div style="position:absolute;left:1572.45px;top:601.75px;font-size:29px;line-height:32.40px;font-weight:400;font-style:normal;color:#666666;white-space:pre;transform:scaleX(0.9542);transform-origin:0 0;">50d 21h</div>
<div style="position:absolute;left:1642.44px;top:743.25px;font-size:29px;line-height:32.40px;font-weight:400;font-style:normal;color:#666666;white-space:pre;transform:scaleX(0.9613);transform-origin:0 0;">0s</div>
<div style="position:absolute;left:1572.45px;top:884.75px;font-size:29px;line-height:32.40px;font-weight:400;font-style:normal;color:#666666;white-space:pre;transform:scaleX(0.9542);transform-origin:0 0;">50d 21h</div>
<div style="position:absolute;left:1724.29px;top:931.61px;font-size:28.6px;line-height:31.95px;font-weight:400;font-style:normal;color:#666666;white-space:pre;transform:scaleX(0.9700);transform-origin:0 0;">May 29</div>
<div style="position:absolute;left:1879.14px;top:931.61px;font-size:28.6px;line-height:31.95px;font-weight:400;font-style:normal;color:#666666;white-space:pre;transform:scaleX(0.9700);transform-origin:0 0;">May 30</div>
<div style="position:absolute;left:2033.99px;top:931.61px;font-size:28.6px;line-height:31.95px;font-weight:400;font-style:normal;color:#666666;white-space:pre;transform:scaleX(0.9700);transform-origin:0 0;">May 31</div>
<div style="position:absolute;left:2201.36px;top:931.61px;font-size:28.6px;line-height:31.95px;font-weight:400;font-style:normal;color:#666666;white-space:pre;transform:scaleX(0.9700);transform-origin:0 0;">Jun 1</div>
<div style="position:absolute;left:2356.21px;top:931.61px;font-size:28.6px;line-height:31.95px;font-weight:400;font-style:normal;color:#666666;white-space:pre;transform:scaleX(0.9700);transform-origin:0 0;">Jun 2</div>
<div style="position:absolute;left:2511.06px;top:931.61px;font-size:28.6px;line-height:31.95px;font-weight:400;font-style:normal;color:#666666;white-space:pre;transform:scaleX(0.9700);transform-origin:0 0;">Jun 3</div>
<div style="position:absolute;left:2665.43px;top:931.61px;font-size:28.6px;line-height:31.95px;font-weight:400;font-style:normal;color:#666666;white-space:pre;transform:scaleX(0.9700);transform-origin:0 0;">Jun 4</div>
<div style="position:absolute;left:2829.40px;top:615.87px;font-size:20.8px;line-height:23.24px;font-weight:400;font-style:normal;color:#02303a;white-space:pre;transform:scaleX(0.9525);transform-origin:0 0;">AVOIDABLE</div>
<div style="position:absolute;left:2828.41px;top:643.87px;font-size:20.8px;line-height:23.24px;font-weight:400;font-style:normal;color:#02303a;white-space:pre;transform:scaleX(0.9862);transform-origin:0 0;-webkit-text-stroke:0.22px #02303a;">127d 23h</div>
<div style="position:absolute;left:2828.40px;top:692.17px;font-size:20.8px;line-height:23.24px;font-weight:400;font-style:normal;color:#02303a;white-space:pre;">UNAVOIDABLE</div>
<div style="position:absolute;left:2828.41px;top:719.37px;font-size:20.8px;line-height:23.24px;font-weight:400;font-style:normal;color:#02303a;white-space:pre;transform:scaleX(0.9862);transform-origin:0 0;-webkit-text-stroke:0.22px #02303a;">188d 20h</div>
<div style="position:absolute;left:2828.45px;top:767.97px;font-size:20.8px;line-height:23.24px;font-weight:400;font-style:normal;color:#02303a;white-space:pre;transform:scaleX(0.9496);transform-origin:0 0;">INSUFF. DATA</div>
<div style="position:absolute;left:2829.40px;top:795.87px;font-size:20.8px;line-height:23.24px;font-weight:400;font-style:normal;color:#02303a;white-space:pre;transform:scaleX(0.9784);transform-origin:0 0;-webkit-text-stroke:0.22px #02303a;">49d 15h</div>
<div style="position:absolute;left:48.60px;top:1036.05px;font-size:29px;line-height:32.40px;font-weight:400;font-style:normal;color:#02303a;white-space:pre;transform:scaleX(0.9544);transform-origin:0 0;-webkit-text-stroke:0.55px #02303a;">Tasks/Goals by mean duration (top 50)</div>
<div style="position:absolute;left:2535.50px;top:1038.45px;font-size:29px;line-height:32.40px;font-weight:400;font-style:normal;color:#02303a;white-space:pre;transform:scaleX(0.9721);transform-origin:0 0;">All predictions</div>
<div style="position:absolute;left:2760.62px;top:1038.45px;font-size:29px;line-height:32.40px;font-weight:400;font-style:normal;color:#02303a;white-space:pre;transform:scaleX(0.9773);transform-origin:0 0;">Only incorrect</div>
<div style="position:absolute;left:47.61px;top:1114.39px;font-size:29.5px;line-height:32.96px;font-weight:400;font-style:normal;color:#6b6b6b;white-space:pre;transform:scaleX(0.9445);transform-origin:0 0;-webkit-text-stroke:0.56px #6b6b6b;">Path</div>
<div style="position:absolute;left:914.70px;top:1114.85px;font-size:29px;line-height:32.40px;font-weight:400;font-style:normal;color:#6b6b6b;white-space:pre;transform:scaleX(0.9652);transform-origin:0 0;-webkit-text-stroke:0.55px #6b6b6b;">Task/Goal failures predicted</div>
<div style="position:absolute;left:1363.00px;top:1114.85px;font-size:29px;line-height:32.40px;font-weight:400;font-style:normal;color:#6b6b6b;white-space:pre;transform:scaleX(0.9628);transform-origin:0 0;-webkit-text-stroke:0.55px #6b6b6b;">Test failures predicted</div>
<div style="position:absolute;left:1857.86px;top:1114.85px;font-size:29px;line-height:32.40px;font-weight:400;font-style:normal;color:#6b6b6b;white-space:pre;transform:scaleX(0.9447);transform-origin:0 0;-webkit-text-stroke:0.55px #6b6b6b;">Simulations</div>
<div style="position:absolute;left:2097.52px;top:1114.85px;font-size:29px;line-height:32.40px;font-weight:400;font-style:normal;color:#02303a;white-space:pre;transform:scaleX(0.9881);transform-origin:0 0;-webkit-text-stroke:0.55px #02303a;">Mean duration</div>
<div style="position:absolute;left:2386.80px;top:1114.85px;font-size:29px;line-height:32.40px;font-weight:400;font-style:normal;color:#6b6b6b;white-space:pre;transform:scaleX(0.9855);transform-origin:0 0;-webkit-text-stroke:0.55px #6b6b6b;">Total test time</div>
<div style="position:absolute;left:2673.04px;top:1114.85px;font-size:29px;line-height:32.40px;font-weight:400;font-style:normal;color:#6b6b6b;white-space:pre;transform:scaleX(0.9591);transform-origin:0 0;-webkit-text-stroke:0.55px #6b6b6b;">Savings potential</div>
<div style="position:absolute;left:48.57px;top:1207.10px;font-size:29.6px;line-height:33.07px;font-weight:400;font-style:normal;color:#707070;white-space:pre;transform:scaleX(0.9284);transform-origin:0 0;">nauty › :core:test</div>
<div style="position:absolute;left:914.00px;top:1207.10px;font-size:29.6px;line-height:33.07px;font-weight:400;font-style:normal;color:#707070;white-space:pre;transform:scaleX(0.9962);transform-origin:0 0;">29 / 29</div>
<div style="position:absolute;left:1012.39px;top:1207.10px;font-size:29.6px;line-height:33.07px;font-weight:400;font-style:normal;color:#9a9a9a;white-space:pre;transform:scaleX(0.9076);transform-origin:0 0;">(100%)</div>
<div style="position:absolute;left:1361.89px;top:1207.10px;font-size:29.6px;line-height:33.07px;font-weight:400;font-style:normal;color:#707070;white-space:pre;transform:scaleX(1.0074);transform-origin:0 0;">77 / 78</div>
<div style="position:absolute;left:1460.70px;top:1207.10px;font-size:29.6px;line-height:33.07px;font-weight:400;font-style:normal;color:#9a9a9a;white-space:pre;transform:scaleX(0.8962);transform-origin:0 0;">(98.7%)</div>
<div style="position:absolute;left:1766.59px;top:1207.10px;font-size:29.6px;line-height:33.07px;font-weight:400;font-style:normal;color:#707070;white-space:pre;transform:scaleX(1.0097);transform-origin:0 0;">50 / 57</div>
<div style="position:absolute;left:2097.87px;top:1207.10px;font-size:29.6px;line-height:33.07px;font-weight:400;font-style:normal;color:#707070;white-space:pre;transform:scaleX(0.9300);transform-origin:0 0;">31 min 46 sec</div>
<div style="position:absolute;left:2386.36px;top:1207.10px;font-size:29.6px;line-height:33.07px;font-weight:400;font-style:normal;color:#707070;white-space:pre;transform:scaleX(0.9443);transform-origin:0 0;">5 d 13 hr</div>
<div style="position:absolute;left:2673.39px;top:1207.10px;font-size:29.6px;line-height:33.07px;font-weight:400;font-style:normal;color:#707070;white-space:pre;transform:scaleX(0.9560);transform-origin:0 0;">1 d 15 hr</div>
<div style="position:absolute;left:2792.01px;top:1207.10px;font-size:29.6px;line-height:33.07px;font-weight:400;font-style:normal;color:#9a9a9a;white-space:pre;transform:scaleX(0.8873);transform-origin:0 0;">(30%)</div>
<div style="position:absolute;left:48.57px;top:1312.40px;font-size:29.6px;line-height:33.07px;font-weight:400;font-style:normal;color:#707070;white-space:pre;transform:scaleX(0.9297);transform-origin:0 0;">nauty › :server:test</div>
<div style="position:absolute;left:913.99px;top:1312.40px;font-size:29.6px;line-height:33.07px;font-weight:400;font-style:normal;color:#707070;white-space:pre;transform:scaleX(1.0074);transform-origin:0 0;">30 / 30</div>
<div style="position:absolute;left:1012.39px;top:1312.40px;font-size:29.6px;line-height:33.07px;font-weight:400;font-style:normal;color:#9a9a9a;white-space:pre;transform:scaleX(0.9076);transform-origin:0 0;">(100%)</div>
<div style="position:absolute;left:1361.89px;top:1312.40px;font-size:29.6px;line-height:33.07px;font-weight:400;font-style:normal;color:#707070;white-space:pre;transform:scaleX(1.0074);transform-origin:0 0;">75 / 78</div>
<div style="position:absolute;left:1460.70px;top:1312.40px;font-size:29.6px;line-height:33.07px;font-weight:400;font-style:normal;color:#9a9a9a;white-space:pre;transform:scaleX(0.8962);transform-origin:0 0;">(96.2%)</div>
<div style="position:absolute;left:1766.70px;top:1312.40px;font-size:29.6px;line-height:33.07px;font-weight:400;font-style:normal;color:#707070;white-space:pre;transform:scaleX(0.9973);transform-origin:0 0;">50 / 51</div>
<div style="position:absolute;left:2097.87px;top:1312.40px;font-size:29.6px;line-height:33.07px;font-weight:400;font-style:normal;color:#707070;white-space:pre;transform:scaleX(0.9300);transform-origin:0 0;">25 min 42 sec</div>
<div style="position:absolute;left:2386.36px;top:1312.40px;font-size:29.6px;line-height:33.07px;font-weight:400;font-style:normal;color:#707070;white-space:pre;transform:scaleX(0.9397);transform-origin:0 0;">5 d 4 hr</div>
<div style="position:absolute;left:2674.36px;top:1312.40px;font-size:29.6px;line-height:33.07px;font-weight:400;font-style:normal;color:#707070;white-space:pre;transform:scaleX(0.9407);transform-origin:0 0;">3 d 6 hr</div>
<div style="position:absolute;left:2775.71px;top:1312.40px;font-size:29.6px;line-height:33.07px;font-weight:400;font-style:normal;color:#9a9a9a;white-space:pre;transform:scaleX(0.8873);transform-origin:0 0;">(63%)</div>
<div style="position:absolute;left:48.57px;top:1417.70px;font-size:29.6px;line-height:33.07px;font-weight:400;font-style:normal;color:#707070;white-space:pre;transform:scaleX(0.9316);transform-origin:0 0;">nauty › :cli:test</div>
<div style="position:absolute;left:914.30px;top:1417.70px;font-size:29.6px;line-height:33.07px;font-weight:400;font-style:normal;color:#707070;white-space:pre;">13 / 14</div>
<div style="position:absolute;left:1012.40px;top:1417.70px;font-size:29.6px;line-height:33.07px;font-weight:400;font-style:normal;color:#9a9a9a;white-space:pre;transform:scaleX(0.8962);transform-origin:0 0;">(92.9%)</div>
<div style="position:absolute;left:1361.89px;top:1417.70px;font-size:29.6px;line-height:33.07px;font-weight:400;font-style:normal;color:#707070;white-space:pre;transform:scaleX(1.0074);transform-origin:0 0;">37 / 38</div>
<div style="position:absolute;left:1460.70px;top:1417.70px;font-size:29.6px;line-height:33.07px;font-weight:400;font-style:normal;color:#9a9a9a;white-space:pre;transform:scaleX(0.8962);transform-origin:0 0;">(97.4%)</div>
<div style="position:absolute;left:1766.40px;top:1417.70px;font-size:29.6px;line-height:33.07px;font-weight:400;font-style:normal;color:#707070;white-space:pre;transform:scaleX(1.0119);transform-origin:0 0;">41 / 42</div>
<div style="position:absolute;left:2098.14px;top:1417.70px;font-size:29.6px;line-height:33.07px;font-weight:400;font-style:normal;color:#707070;white-space:pre;transform:scaleX(0.9285);transform-origin:0 0;">19 min 41 sec</div>
<div style="position:absolute;left:2386.36px;top:1417.70px;font-size:29.6px;line-height:33.07px;font-weight:400;font-style:normal;color:#707070;white-space:pre;transform:scaleX(0.9443);transform-origin:0 0;">3 d 18 hr</div>
<div style="position:absolute;left:2674.35px;top:1417.70px;font-size:29.6px;line-height:33.07px;font-weight:400;font-style:normal;color:#707070;white-space:pre;transform:scaleX(0.9477);transform-origin:0 0;">2 d 14 hr</div>
<div style="position:absolute;left:2792.01px;top:1417.70px;font-size:29.6px;line-height:33.07px;font-weight:400;font-style:normal;color:#9a9a9a;white-space:pre;transform:scaleX(0.8873);transform-origin:0 0;">(69%)</div>
<div style="position:absolute;left:2962px;top:690px;width:48px;height:30px;background:#fff"></div>
</body></html>
